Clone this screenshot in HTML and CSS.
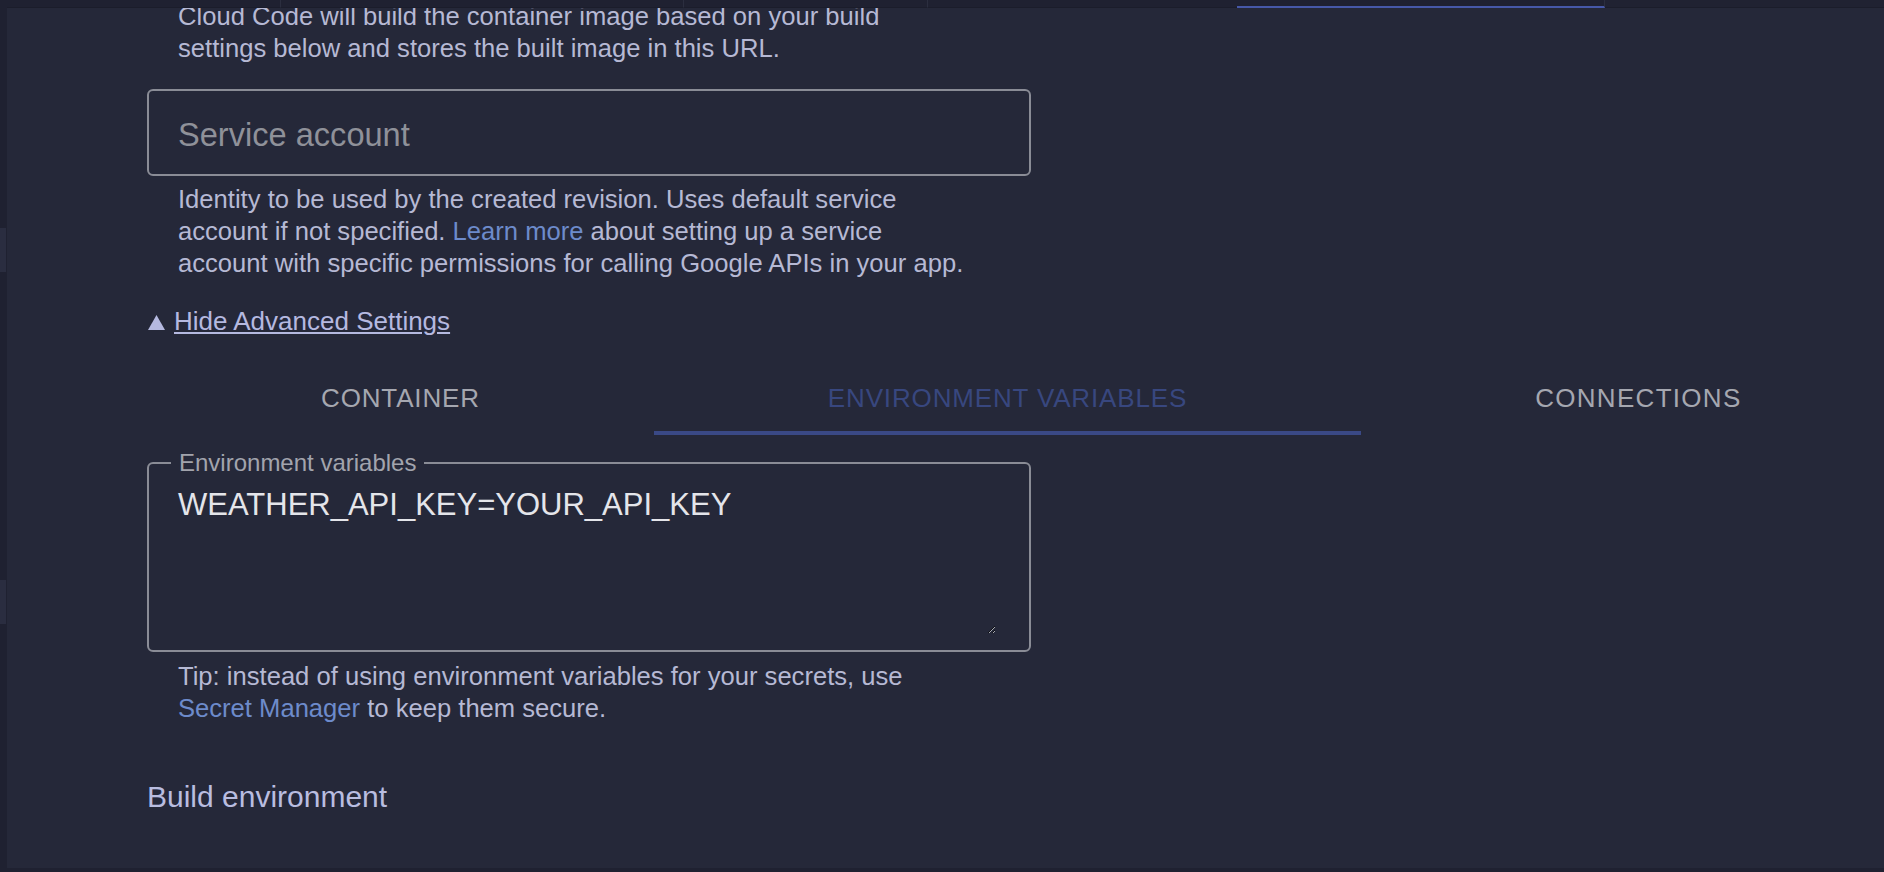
FILE: index.html
```html
<!DOCTYPE html>
<html lang="en">
<head>
<meta charset="UTF-8" />
<meta name="viewport" content="width=device-width, initial-scale=1" />
<title>Deploy to Cloud Run</title>
<link rel="stylesheet" href="styles.css">
</head>
<body>

<div class="app">
  <div class="side">
    <div class="side-item"></div>
    <div class="side-item second"></div>
  </div>

  <div class="main">
    <div class="editor-tabs">
      <div class="etab w1"></div>
      <div class="etab w2"></div>
      <div class="etab w3"></div>
      <div class="etab w4"></div>
      <div class="etab w5 active"></div>
      <div class="etab rest"></div>
    </div>

    <div class="scroll">
      <div class="page">
        <p class="help">Cloud Code will build the container image based on your build settings below and stores the built image in this URL.</p>

        <div class="field">
          <input type="text" placeholder="Service account" />
        </div>
        <p class="help tight">Identity to be used by the created revision. Uses default service account if not specified. <a href="#">Learn more</a> about setting up a service account with specific permissions for calling Google APIs in your app.</p>

        <div class="toggle">
          <svg class="tri" width="17" height="15" viewBox="0 0 17 15"><path d="M8.5 0 L17 15 L0 15 Z" fill="currentColor"/></svg>
          <a href="#">Hide Advanced Settings</a>
        </div>

        <div class="tabs">
          <div class="tab">CONTAINER</div>
          <div class="tab active">ENVIRONMENT VARIABLES</div>
          <div class="tab">CONNECTIONS</div>
        </div>

        <fieldset class="env">
          <legend>Environment variables</legend>
          <textarea spellcheck="false">WEATHER_API_KEY=YOUR_API_KEY</textarea>
        </fieldset>
        <p class="help tip">Tip: instead of using environment variables for your secrets, use <a href="#">Secret Manager</a> to keep them secure.</p>

        <h2>Build environment</h2>
      </div>
    </div>
  </div>
</div>

</body>
</html>
```

FILE: styles.css
```css
body {
  margin: 0;
  background: #252839;
  font-family: "Liberation Sans", Arial, sans-serif;
  overflow: hidden;
}
.app {
  display: flex;
  height: 872px;
}
.side {
  width: 7px;
  background: #1f2131;
  padding-top: 228px;
  box-sizing: border-box;
}
.side-item {
  width: 6px;
  height: 44px;
  background: #2a2d40;
}
.side-item.second {
  margin-top: 308px;
}
.main {
  flex: 1;
  min-width: 0;
  display: flex;
  flex-direction: column;
}
.editor-tabs {
  display: flex;
  height: 8px;
  background: #1f2131;
}
.etab {
  border-right: 1px solid #2b2e3f;
  border-bottom: 1px solid #1b1d2b;
  box-sizing: border-box;
}
.etab.w1 { width: 274px; }
.etab.w2 { width: 403px; }
.etab.w3 { width: 244px; }
.etab.w4 { width: 309px; border-right: none; }
.etab.w5 { width: 368px; }
.etab.rest { flex: 1; border-right: none; background: #202232; }
.etab.active {
  border-bottom: 2px solid #4658a8;
}
.scroll {
  flex: 1;
  overflow: hidden;
  border-bottom: 4px solid #1f2131;
}
.page {
  margin-top: -8px;
  padding-left: 140px;
}
.help {
  margin: 0;
  padding-left: 31px;
  max-width: 791px;
  font-size: 25.6px;
  line-height: 32px;
  color: #b6b9d4;
}
.help a {
  color: #6d8bcb;
  text-decoration: none;
}
.help.tight {
  margin-top: 7px;
}
.field {
  margin-top: 25px;
  width: 884px;
  height: 87px;
  box-sizing: border-box;
  border: 2px solid #8a8c96;
  border-radius: 6px;
  display: flex;
  align-items: center;
}
.field input {
  flex: 1;
  background: transparent;
  border: none;
  outline: none;
  padding: 0 0 0 29px;
  margin-top: 4px;
  font-family: inherit;
  font-size: 32.6px;
  color: #e4e5ea;
}
.field input::placeholder {
  color: #8f9199;
}
.toggle {
  margin-top: 26px;
  display: flex;
  align-items: center;
  gap: 9px;
  font-size: 26px;
  line-height: 32px;
  color: #b5b9e0;
}
.toggle .tri {
  margin-left: 1px;
  margin-top: 3px;
}
.toggle a {
  color: #b5b9e0;
  text-decoration: underline;
}
.tabs {
  display: flex;
  margin-top: 31px;
  white-space: nowrap;
}
.tab {
  padding: 14px 174px 17px;
  font-size: 26px;
  line-height: 32px;
  letter-spacing: 0.85px;
  color: #a5a7b0;
  border-bottom: 4px solid transparent;
}
.tab:last-child {
  letter-spacing: 1.3px;
}
.tab.active {
  color: #38477f;
  border-bottom-color: #3a4986;
}
.env {
  margin: 14px 0 0;
  width: 884px;
  box-sizing: border-box;
  padding: 0 33px 16px 22px;
  border: 2px solid #8a8c96;
  border-radius: 6px;
}
.env legend {
  padding: 0 8px;
  font-size: 24px;
  line-height: 28px;
  color: #a2a4ad;
}
.env textarea {
  display: block;
  width: 100%;
  height: 157px;
  box-sizing: border-box;
  padding: 9px 0 0 7px;
  margin: 0;
  background: transparent;
  border: none;
  outline: none;
  resize: vertical;
  color-scheme: dark;
  font-family: inherit;
  font-size: 31px;
  line-height: 37px;
  color: #e4e5ea;
}
.help.tip {
  margin-top: 8px;
}
h2 {
  margin: 55px 0 0;
  font-size: 30px;
  line-height: 36px;
  font-weight: normal;
  color: #b9bde0;
}
```
